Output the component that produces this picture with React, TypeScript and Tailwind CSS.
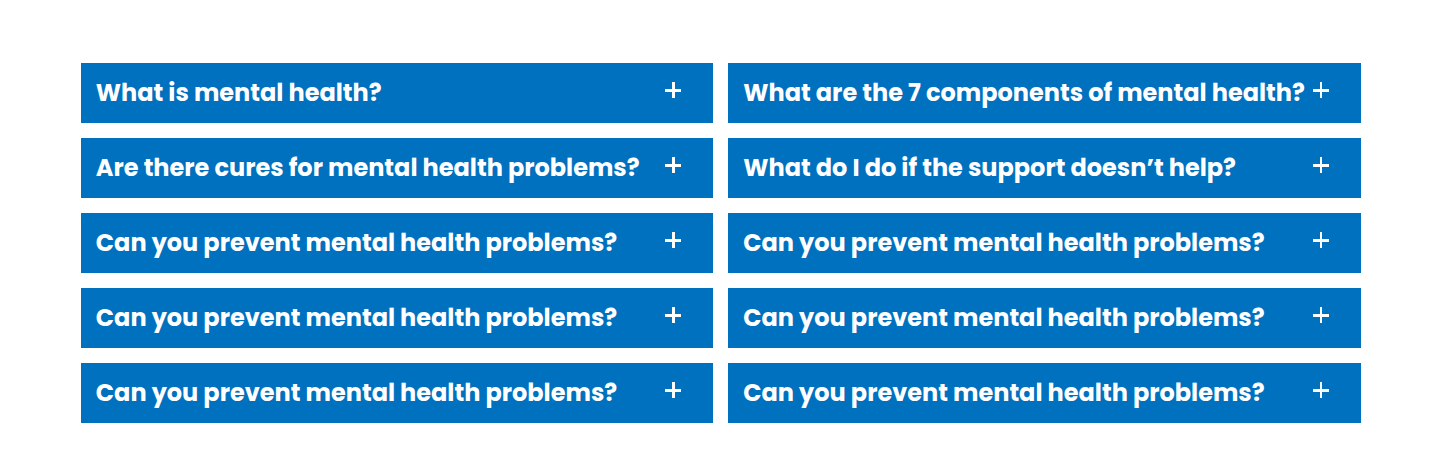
import { useState } from "react";

const questions: string[] = [
  "What is mental health?",
  "What are the 7 components of mental health?",
  "Are there cures for mental health problems?",
  "What do I do if the support doesn’t help?",
  "Can you prevent mental health problems?",
  "Can you prevent mental health problems?",
  "Can you prevent mental health problems?",
  "Can you prevent mental health problems?",
  "Can you prevent mental health problems?",
  "Can you prevent mental health problems?",
];

function Question({ text, stem }: { text: string; stem: number }) {
  const [open, setOpen] = useState(false);
  return (
    <button
      type="button"
      aria-expanded={open}
      onClick={() => setOpen(!open)}
      className="flex min-h-15 w-full items-center justify-between bg-[#0071bf] pr-8 pl-[15px] text-left text-white"
    >
      <span className="text-2xl font-bold">{text}</span>
      <svg viewBox="0 0 16 16" className="mb-1.5 size-4 shrink-0" fill="currentColor" shapeRendering="crispEdges" aria-hidden="true">
        <rect x="0" y="7" width="16" height="3" />
        {!open && <rect x="7" y="0" width={stem} height="16" />}
      </svg>
    </button>
  );
}

export default function App() {
  return (
    <main className="bg-white py-[63px] pr-[5.7%] pl-[5.6%] font-[Poppins,Inter,sans-serif]">
      <div className="grid grid-cols-1 gap-[15px] md:grid-cols-2">
        {questions.map((q, i) => (
          <Question key={i} text={q} stem={i % 2 === 0 ? 3 : 2} />
        ))}
      </div>
    </main>
  );
}
